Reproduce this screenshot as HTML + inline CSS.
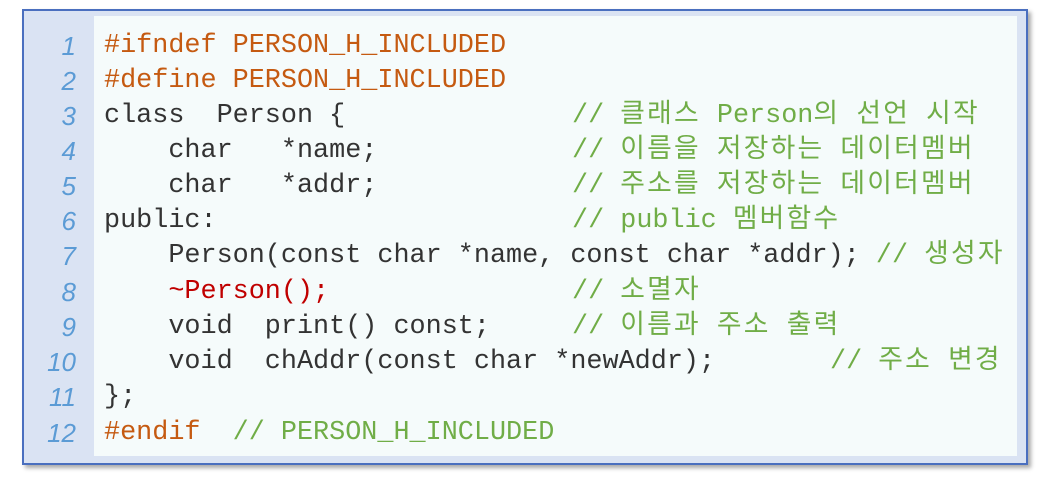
<!DOCTYPE html>
<html><head><meta charset="utf-8"><style>
body{margin:0;width:1061px;height:484px;background:#fff;position:relative;overflow:hidden}
.box{position:absolute;left:22px;top:9px;width:1002px;height:452px;background:#dae3f3;border:2px solid #4a6fbf;box-shadow:3px 3px 4px #aaa}
.in{position:absolute;left:94px;top:16px;width:923px;height:440px;background:#f5fbfb}
.l{position:absolute;left:0;height:35px;line-height:35px;font-family:"Liberation Mono","Noto Sans CJK KR",monospace;font-size:26.8px;color:#333;white-space:pre}
.n{position:absolute;width:76px;text-align:right;left:0;height:35px;line-height:35px;font-family:"Liberation Sans",sans-serif;font-style:italic;font-size:26px;color:#5b9bd5}
.o{color:#c55a11}.g{color:#70ad47}.r{color:#c00000}
.k{letter-spacing:2.2px}
</style></head><body>
<div class="box"></div><div class="in"></div>
<div style="position:absolute;left:0;top:3px;width:1061px;height:480px">
<div class="n" style="top:26px">1</div>
<div class="n" style="top:61px">2</div>
<div class="n" style="top:96px">3</div>
<div class="n" style="top:131px">4</div>
<div class="n" style="top:166px">5</div>
<div class="n" style="top:201px">6</div>
<div class="n" style="top:236px">7</div>
<div class="n" style="top:272px">8</div>
<div class="n" style="top:307px">9</div>
<div class="n" style="top:342px">10</div>
<div class="n" style="top:377px">11</div>
<div class="n" style="top:413px">12</div>
<div class="l o" style="top:26px;left:104px">#ifndef PERSON_H_INCLUDED</div>
<div class="l o" style="top:61px;left:104px">#define PERSON_H_INCLUDED</div>
<div class="l" style="top:96px;left:104px">class  Person {</div>
<div class="l g" style="top:96px;left:572px">// <span class="k">클래스</span> Person<span class="k">의</span> <span class="k">선언</span> <span class="k">시작</span></div>
<div class="l" style="top:131px;left:104px">    char   *name;</div>
<div class="l g" style="top:131px;left:572px">// <span class="k">이름을</span> <span class="k">저장하는</span> <span class="k">데이터멤버</span></div>
<div class="l" style="top:166px;left:104px">    char   *addr;</div>
<div class="l g" style="top:166px;left:572px">// <span class="k">주소를</span> <span class="k">저장하는</span> <span class="k">데이터멤버</span></div>
<div class="l" style="top:201px;left:104px">public:</div>
<div class="l g" style="top:201px;left:572px">// public <span class="k">멤버함수</span></div>
<div class="l" style="top:236px;left:104px">    Person(const char *name, const char *addr); <span class="g">// <span class="k">생성자</span></span></div>
<div class="l r" style="top:272px;left:104px">    ~Person();</div>
<div class="l g" style="top:272px;left:572px">// <span class="k">소멸자</span></div>
<div class="l" style="top:307px;left:104px">    void  print() const;</div>
<div class="l g" style="top:307px;left:572px">// <span class="k">이름과</span> <span class="k">주소</span> <span class="k">출력</span></div>
<div class="l" style="top:342px;left:104px">    void  chAddr(const char *newAddr);</div>
<div class="l g" style="top:342px;left:830px">// <span class="k">주소</span> <span class="k">변경</span></div>
<div class="l" style="top:377px;left:104px">};</div>
<div class="l o" style="top:413px;left:104px">#endif  <span class="g">// PERSON_H_INCLUDED</span></div>
</div>
</body></html>
